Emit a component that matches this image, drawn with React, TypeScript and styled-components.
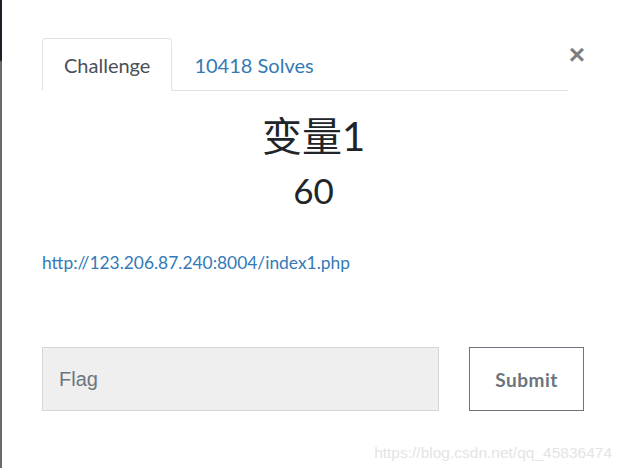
import React from "react";
import styled, { createGlobalStyle } from "styled-components";

const Global = createGlobalStyle`
  html, body { margin: 0; padding: 0; background: #fff; }
  body { font-family: Lato, "Noto Sans CJK SC", sans-serif; }
  * { box-sizing: border-box; }
`;

const Page = styled.div`
  display: flex;
  width: 624px;
  height: 468px;
  overflow: hidden;
  background: #fff;
`;

const Edge = styled.div`
  width: 2px;
  flex: none;
  background: linear-gradient(#1c2027 0, #1c2027 60px, #6a6a6a 62px, #6a6a6a 100%);
`;

const Modal = styled.div`
  flex: 1;
  display: flex;
  flex-direction: column;
  padding: 38px 39px 0 40px;
`;

const Header = styled.div`
  display: flex;
  align-items: flex-start;
`;

const Tabs = styled.div`
  flex: 1;
  display: flex;
  border-bottom: 1px solid #dee2e6;
  margin-right: 1px;
`;

const Tab = styled.div<{ $active?: boolean }>`
  padding: 11px 21px 10px;
  font-size: 20px;
  line-height: 30px;
  margin-bottom: -1px;
  border: 1px solid ${(p) => (p.$active ? "#dee2e6" : "transparent")};
  border-bottom-color: ${(p) => (p.$active ? "#fff" : "transparent")};
  border-radius: 4px 4px 0 0;
  color: ${(p) => (p.$active ? "#495057" : "#337ab7")};
  background: ${(p) => (p.$active ? "#fff" : "transparent")};
`;

const Close = styled.div`
  font-family: "Liberation Sans", sans-serif;
  font-size: 28px;
  font-weight: 700;
  line-height: 1;
  color: #000;
  opacity: 0.5;
  margin-top: 3px;
`;

const Body = styled.div`
  display: flex;
  flex-direction: column;
`;

const Title = styled.div`
  text-align: center;
  font-size: 40px;
  line-height: 48px;
  color: #212529;
  margin-top: 21px;
`;

const Value = styled.div`
  text-align: center;
  font-size: 35px;
  line-height: 42px;
  color: #212529;
  margin-top: 9px;
`;

const Link = styled.a`
  display: block;
  margin-top: 40px;
  font-size: 17.4px;
  line-height: 24px;
  color: #337ab7;
  text-decoration: none;
`;

const FormRow = styled.div`
  display: flex;
  gap: 30px;
  margin-top: 72px;
`;

const FlagInput = styled.div`
  flex: none;
  width: 397px;
  height: 64px;
  background: #efefef;
  border: 1px solid #d3d6da;
  padding: 0 16px;
  display: flex;
  align-items: center;
  font-family: "Liberation Sans", sans-serif;
  font-size: 20px;
  color: #6c757d;
`;

const SubmitButton = styled.div`
  flex: none;
  width: 115px;
  height: 64px;
  border: 1px solid #6c757d;
  display: flex;
  align-items: center;
  justify-content: center;
  font-size: 19px;
  font-weight: 700;
  letter-spacing: 0.5px;
  color: #6c757d;
`;

const Watermark = styled.div`
  align-self: flex-end;
  margin-top: 33px;
  margin-right: -27px;
  font-family: "Liberation Sans", sans-serif;
  font-size: 15.5px;
  line-height: 18px;
  color: #e4e4e4;
`;

export default function App() {
  return (
    <>
      <Global />
      <Page>
        <Edge />
        <Modal>
          <Header>
            <Tabs>
              <Tab $active>Challenge</Tab>
              <Tab>10418 Solves</Tab>
            </Tabs>
            <Close>×</Close>
          </Header>
          <Body>
            <Title>变量1</Title>
            <Value>60</Value>
            <Link href="#">http://123.206.87.240:8004/index1.php</Link>
            <FormRow>
              <FlagInput>Flag</FlagInput>
              <SubmitButton>Submit</SubmitButton>
            </FormRow>
            <Watermark>https://blog.csdn.net/qq_45836474</Watermark>
          </Body>
        </Modal>
      </Page>
    </>
  );
}
